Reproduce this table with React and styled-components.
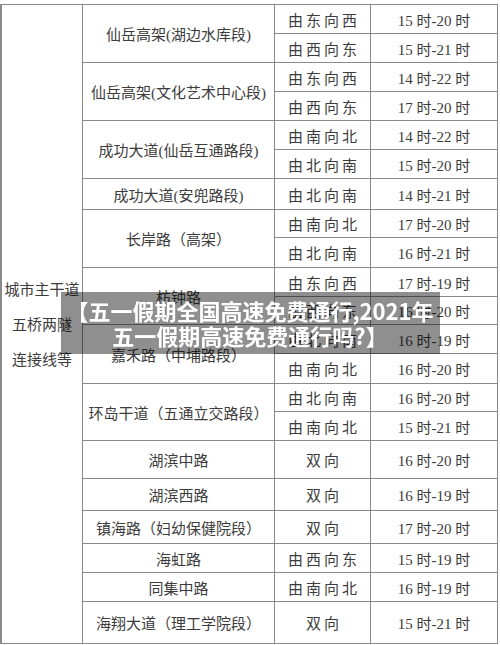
import React from 'react';
import styled, { createGlobalStyle } from 'styled-components';

const GlobalStyle = createGlobalStyle`
  html, body {
    margin: 0;
    padding: 0;
    background: #fff;
  }
`;

const groups = [
  { road: '仙岳高架(湖边水库段)', rows: [['由东向西', '15 时-20 时', 29], ['由西向东', '15 时-21 时', 29]] },
  { road: '仙岳高架(文化艺术中心段)', rows: [['由东向西', '14 时-22 时', 29], ['由西向东', '17 时-20 时', 29]] },
  { road: '成功大道(仙岳互通路段)', rows: [['由南向北', '14 时-22 时', 29], ['由北向南', '15 时-20 时', 29]] },
  { road: '成功大道(安兜路段)', rows: [['由北向南', '14 时-21 时', 31]] },
  { road: '长岸路（高架）', rows: [['由南向北', '17 时-20 时', 28], ['由北向南', '16 时-21 时', 30]] },
  { road: '枋钟路', rows: [['由东向西', '17 时-19 时', 29], ['由西向东', '16 时-20 时', 28]] },
  { road: '嘉禾路（中埔路段）', rows: [['由北向南', '16 时-19 时', 29], ['由南向北', '16 时-20 时', 30]] },
  { road: '环岛干道（五通立交路段）', rows: [['由北向南', '16 时-20 时', 28], ['由南向北', '15 时-21 时', 29]] },
  { road: '湖滨中路', rows: [['双向', '16 时-20 时', 38]] },
  { road: '湖滨西路', rows: [['双向', '16 时-19 时', 32]] },
  { road: '镇海路（妇幼保健院段）', rows: [['双向', '17 时-20 时', 33]] },
  { road: '海虹路', rows: [['由西向东', '15 时-19 时', 29]] },
  { road: '同集中路', rows: [['由南向北', '16 时-19 时', 29]] },
  { road: '海翔大道（理工学院段）', rows: [['双向', '15 时-21 时', 42]] },
];

const Page = styled.div`
  padding-top: 4px;
  width: 498px;
`;

const Table = styled.div`
  display: grid;
  grid-template-columns: 80px 191px 95px 126px;
  grid-template-rows: ${(p) => p.$rows};
  gap: 1px;
  padding: 1px 1px 1px 2px;
  background: #8a8a8a;
  font-family: 'Liberation Serif', 'Noto Sans CJK SC', serif;
  font-size: 15px;
  color: #3c3c3c;
`;

const Cell = styled.div`
  background: #fff;
  display: flex;
  align-items: center;
  justify-content: center;
  text-align: center;
  white-space: nowrap;
  grid-row: ${(p) => `${p.$row} / span ${p.$span || 1}`};
`;

const CategoryCell = styled(Cell)`
  grid-column: 1;
  flex-direction: column;
  line-height: 35px;
  padding-top: 2px;
`;

const RoadCell = styled(Cell)`
  grid-column: 2;
`;

const DirectionCell = styled(Cell)`
  grid-column: 3;
  letter-spacing: 3px;
  padding-left: 3px;
`;

const TimeCell = styled(Cell)`
  grid-column: 4;
`;

const Overlay = styled.div`
  position: fixed;
  inset: 0;
  display: flex;
  align-items: center;
  justify-content: center;
  pointer-events: none;
`;

const Banner = styled.div`
  width: 379px;
  height: 62px;
  box-sizing: border-box;
  padding-top: 6px;
  background: rgba(0, 0, 0, 0.44);
  color: #fff;
  font-family: 'Noto Sans CJK SC', sans-serif;
  font-weight: 700;
  font-size: 22px;
  line-height: 25px;
  text-align: center;
  white-space: pre-line;
`;

export default function App() {
  const allRows = groups.flatMap((g) => g.rows);
  const rowTracks = allRows.map((r) => `${r[2] - 1}px`).join(' ');

  let rowIndex = 1;
  const cells = [];
  groups.forEach((g, gi) => {
    const start = rowIndex;
    cells.push(
      <RoadCell key={`road-${gi}`} $row={start} $span={g.rows.length}>
        {g.road}
      </RoadCell>
    );
    g.rows.forEach(([dir, time], ri) => {
      cells.push(
        <DirectionCell key={`dir-${gi}-${ri}`} $row={rowIndex}>{dir}</DirectionCell>,
        <TimeCell key={`time-${gi}-${ri}`} $row={rowIndex}>{time}</TimeCell>
      );
      rowIndex += 1;
    });
  });

  return (
    <>
      <GlobalStyle />
      <Page>
        <Table $rows={rowTracks}>
          <CategoryCell $row={1} $span={allRows.length}>
            <span>城市主干道</span>
            <span>五桥两隧</span>
            <span>连接线等</span>
          </CategoryCell>
          {cells}
        </Table>
      </Page>
      <Overlay>
        <Banner>{'【五一假期全国高速免费通行,2021年\n五一假期高速免费通行吗?】'}</Banner>
      </Overlay>
    </>
  );
}
